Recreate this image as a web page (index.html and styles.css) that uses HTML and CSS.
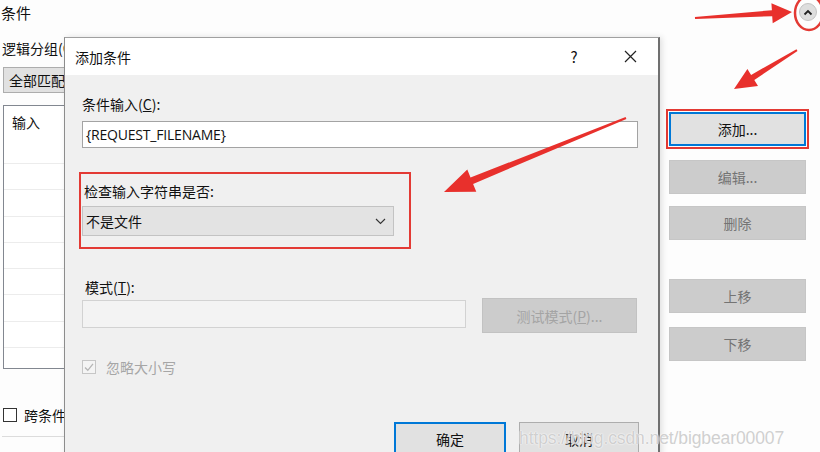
FILE: index.html
```html
<!DOCTYPE html>
<html lang="zh-CN">
<head>
<meta charset="utf-8">
<title>添加条件</title>
<link rel="stylesheet" href="styles.css">
</head>
<body>
<div class="page">
  <header class="top">
    <span class="top-title">条件</span>
    <span class="collapse">
      <svg width="10" height="7" viewBox="0 0 10 7"><polyline points="1.5,5.5 5,2 8.5,5.5" fill="none" stroke="#222" stroke-width="1.8"/></svg>
    </span>
  </header>

  <div class="main">
    <section class="left">
      <div class="lbl">逻辑分组(G):</div>
      <div class="combo">全部匹配</div>
      <div class="list">
        <div class="list-head">输入</div>
        <div class="row"></div>
        <div class="row"></div>
        <div class="row"></div>
        <div class="row"></div>
        <div class="row"></div>
        <div class="row"></div>
        <div class="row"></div>
        <div class="row"></div>
      </div>
      <div class="chk"><span class="box"></span><span>跨条件跟踪分组(K)</span></div>
      <div class="rule"></div>
    </section>

    <aside class="btns">
      <div class="btn btn-add">添加...</div>
      <div class="btn btn-off b-edit">编辑...</div>
      <div class="btn btn-off b-del">删除</div>
      <div class="btn btn-off b-up">上移</div>
      <div class="btn btn-off b-down">下移</div>
    </aside>
  </div>

  <div class="dialog">
    <div class="dlg-title">
      <span class="dlg-name">添加条件</span>
      <span class="dlg-help">?</span>
      <span class="dlg-close">
        <svg width="13" height="13" viewBox="0 0 13 13"><path d="M1 1L12 12M12 1L1 12" stroke="#222" stroke-width="1.2"/></svg>
      </span>
    </div>
    <div class="dlg-body">
      <div class="field-lbl">条件输入(<u>C</u>):</div>
      <div class="textbox">{REQUEST_FILENAME}</div>

      <div class="hl-group">
        <div class="field-lbl">检查输入字符串是否:</div>
        <div class="select">
          <span>不是文件</span>
          <svg width="11" height="7" viewBox="0 0 11 7"><polyline points="1,1 5.5,5.5 10,1" fill="none" stroke="#333" stroke-width="1.1"/></svg>
        </div>
      </div>

      <div class="field-lbl mode-lbl">模式(<u>T</u>):</div>
      <div class="mode-row">
        <div class="textbox disabled"></div>
        <div class="test-btn">测试模式(<u>P</u>)...</div>
      </div>

      <div class="ignore">
        <span class="cbox">
          <svg width="12" height="12" viewBox="0 0 12 12"><polyline points="2,6.5 4.8,9.3 10,2.8" fill="none" stroke="#b5b5b5" stroke-width="1.3"/></svg>
        </span>
        <span>忽略大小写</span>
      </div>

      <div class="footer">
        <div class="dbtn ok">确定</div>
        <div class="dbtn cancel">取消</div>
      </div>
    </div>
  </div>

  <svg class="annot" width="820" height="452" viewBox="0 0 820 452">
    <ellipse cx="809" cy="13" rx="14" ry="17" fill="none" stroke="#e33a34" stroke-width="2.5"/>
    <polygon fill="#e8302c" points="694.9,17 771.9,10.2 771.4,3.3 792,12 772.7,23.2 772.2,16.2 695.1,19"/>
    <polygon fill="#e8302c" points="796.5,49.2 751.1,74.9 747.4,68.9 734,89 758,85.9 754.3,80 797.5,50.9"/>
    <polygon fill="#e8302c" points="625.6,117.1 470.5,177.5 467.3,169.6 444,192 476.3,191.8 473.1,183.9 626.4,118.9"/>
  </svg>

  <div class="watermark">https://blog.csdn.net/bigbear00007</div>
</div>
</body>
</html>
```

FILE: styles.css
```css
* { box-sizing: border-box; }
html, body { margin: 0; padding: 0; }
body {
  font-family: "Noto Sans CJK SC", "Microsoft YaHei", sans-serif;
  font-size: 14px;
  color: #111;
  background: #fff;
}
.page {
  position: relative;
  width: 820px;
  height: 452px;
  overflow: hidden;
  background: #fdfdfd;
}

/* header */
.top {
  height: 30px;
  display: flex;
  justify-content: space-between;
  align-items: flex-start;
}
.top-title {
  font-size: 15px;
  line-height: 20px;
  padding: 3px 0 0 1px;
}
.collapse {
  width: 18px;
  height: 18px;
  margin: 3px 3px 0 0;
  border-radius: 50%;
  background: #dedede;
  border: 1px solid #c4c4c4;
  display: flex;
  align-items: center;
  justify-content: center;
}

/* main area */
.main {
  display: grid;
  grid-template-columns: 669px 137px;
}
.left { padding-left: 2px; }
.lbl { line-height: 20px; margin-top: 8px; }
.combo {
  margin-top: 9px;
  margin-left: 1px;
  width: 220px;
  height: 26px;
  line-height: 24px;
  padding-left: 5px;
  background: #e1e1e1;
  border: 1px solid #adadad;
}
.list {
  margin-top: 12px;
  margin-left: 1px;
  width: 640px;
  height: 264px;
  background: #fff;
  border: 1px solid #828790;
}
.list-head {
  height: 57px;
  line-height: 20px;
  padding: 6px 0 0 8px;
}
.row {
  height: 26.3px;
  border-top: 1px solid #ececec;
}
.chk {
  margin-top: 36px;
  display: flex;
  align-items: center;
  gap: 7px;
  line-height: 20px;
  margin-left: 1px;
}
.chk .box {
  width: 14px;
  height: 14px;
  border: 1px solid #333;
  background: #fff;
}
.rule {
  margin-top: 11px;
  height: 1px;
  background: #dcdcdc;
}

/* right buttons */
.btns {
  padding-top: 82px;
  display: flex;
  flex-direction: column;
}
.btn {
  height: 34px;
  display: flex;
  align-items: center;
  justify-content: center;
  font-size: 14px;
}
.btn-add {
  background: #e1e1e1;
  border: 2px solid #0078d7;
  color: #111;
  outline: 2px solid #e33a34;
  outline-offset: 1px;
}
.btn-off {
  background: #cccccc;
  border: 1px solid #c6c6c6;
  color: #747474;
}
.b-edit { margin-top: 14px; }
.b-del { margin-top: 12px; }
.b-up { margin-top: 39px; }
.b-down { margin-top: 14px; }

/* dialog */
.dialog {
  position: absolute;
  left: 64px;
  top: 37px;
  width: 596px;
  height: 430px;
  border-left: 1px solid #8c8c8c;
  border-top: 1px solid #a0a0a0;
  border-right: 2px solid #707070;
  background: #f0f0f0;
  box-shadow: 2px 0 6px rgba(0,0,0,0.12);
}
.dlg-title {
  height: 37px;
  background: #fff;
  display: flex;
  align-items: center;
  padding-left: 10px;
}
.dlg-name { flex: 1; line-height: 20px; }
.dlg-help {
  width: 20px;
  text-align: center;
  font-size: 15px;
  margin-right: 40px;
}
.dlg-close {
  width: 14px;
  margin-right: 20px;
  display: flex;
}
.dlg-body {
  padding: 19px 20px 0 17px;
  display: flex;
  flex-direction: column;
}
.field-lbl { line-height: 20px; }
.textbox {
  margin-top: 7px;
  height: 27px;
  line-height: 25px;
  padding-left: 3px;
  background: #fff;
  border: 1px solid #a3a3a3;
  font-family: "Open Sans", "Noto Sans CJK SC", sans-serif;
  font-size: 14px;
  letter-spacing: -0.2px;
}
.hl-group {
  margin-top: 24px;
  margin-left: -3px;
  width: 332px;
  border: 2px solid #e33a34;
  padding: 7px 15px 11px 1px;
}
.hl-group .field-lbl { padding-left: 2px; }
.select {
  margin-top: 5px;
  height: 30px;
  background: #e3e3e3;
  border: 1px solid #c3c3c3;
  display: flex;
  align-items: center;
  justify-content: space-between;
  padding: 0 7px 0 3px;
}
.mode-lbl { margin-top: 28px; padding-left: 3px; }
.mode-row {
  margin-top: 1px;
  display: flex;
  align-items: flex-start;
  gap: 16px;
}
.textbox.disabled {
  margin-top: 2px;
  width: 384px;
  height: 28px;
  background: #f3f3f3;
  border: 1px solid #d2d2d2;
}
.test-btn {
  width: 155px;
  height: 35px;
  background: #cccccc;
  border: 1px solid #c2c2c2;
  color: #a4a4a4;
  display: flex;
  align-items: center;
  justify-content: center;
}
.ignore {
  margin-top: 24px;
  display: flex;
  align-items: center;
  gap: 10px;
  line-height: 20px;
  color: #a6a6a6;
}
.cbox {
  width: 14px;
  height: 14px;
  border: 1px solid #c6c6c6;
  background: #f4f4f4;
  display: flex;
  align-items: center;
  justify-content: center;
}
.footer {
  margin-top: 45px;
  display: flex;
  justify-content: flex-end;
  gap: 13px;
}
.dbtn {
  height: 34px;
  background: #e1e1e1;
  display: flex;
  align-items: center;
  justify-content: center;
}
.dbtn.ok { width: 112px; border: 2px solid #0078d7; }
.dbtn.cancel { width: 120px; border: 1px solid #adadad; margin-right: -1px; }

/* annotation overlay */
.annot {
  position: absolute;
  left: 0;
  top: 0;
  pointer-events: none;
}
.watermark {
  position: absolute;
  left: 519px;
  top: 428px;
  font-family: "Liberation Sans", Arial, sans-serif;
  font-size: 17.5px;
  letter-spacing: -0.1px;
  color: rgba(195,195,195,0.8);
  text-shadow: 0 0 2px #fff, 0 0 1px #fff;
  white-space: nowrap;
  pointer-events: none;
}
```
